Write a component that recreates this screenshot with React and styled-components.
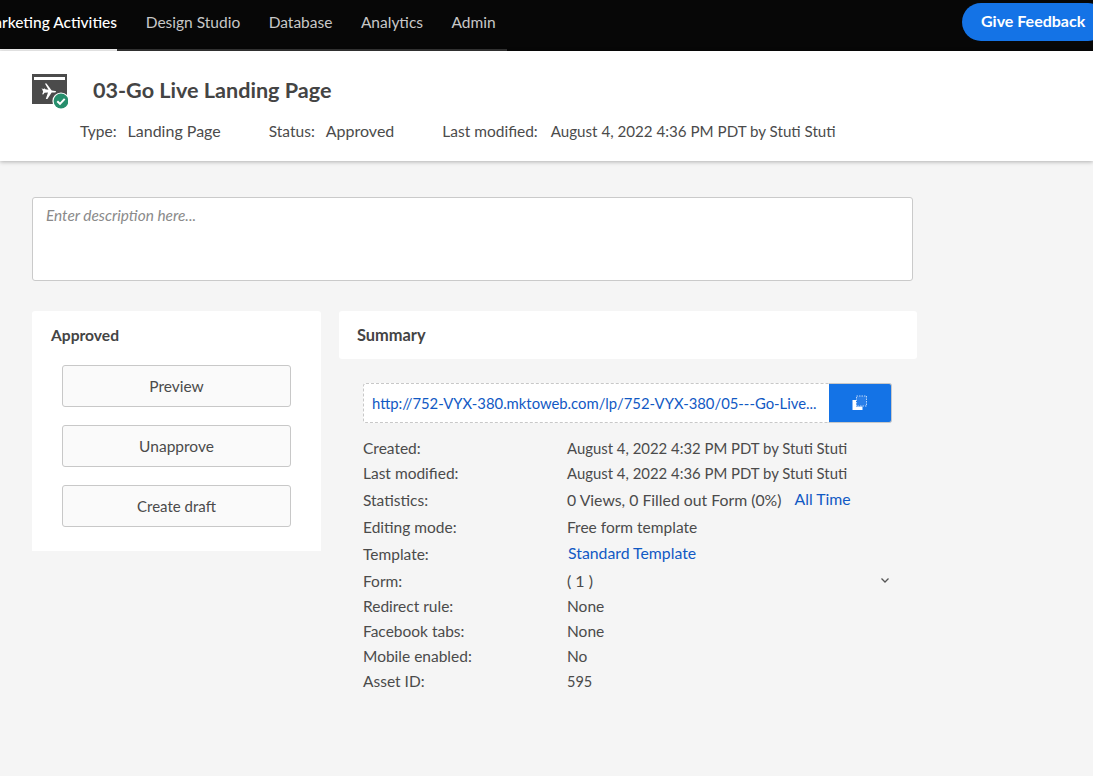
import React from "react";
import styled, { createGlobalStyle } from "styled-components";

const Global = createGlobalStyle`
  html, body { margin: 0; padding: 0; background: #f5f5f5; }
  body { font-family: Lato, "Open Sans", "Liberation Sans", sans-serif; color: #4b4b4b; overflow: hidden; }
`;
const Page = styled.div`width: 1093px; height: 776px; overflow: hidden; display: flex; flex-direction: column;`;
const Nav = styled.nav`height: 51px; flex: none; background: #070707; display: flex; align-items: stretch; justify-content: space-between; overflow: hidden;`;
const Tabs = styled.div`display: flex; margin-left: -20px; height: 51px; width: 527px; box-shadow: inset 0 -2px 0 #333;`;
const Tab = styled.a`
  display: flex; align-items: center; box-sizing: border-box; height: 51px; padding: 0 14.25px 7px; font-size: 15.5px; white-space: nowrap;
  color: ${p => p.$active ? "#fff" : "#c8c8c8"};
  ${p => p.$active && `box-shadow: inset 0 -2px 0 #f0f0f0; padding: 0 0 7px; font-weight: 500; margin-right: 14.5px;`}
`;
const Feedback = styled.button`
  margin-top: 3px; height: 38px; width: 145px; margin-right: -14px; border: 0; border-radius: 19px; background: #1473e6; color: #fff;
  font: 700 16px Lato, sans-serif; text-align: left; padding: 0 0 4px 19px; white-space: nowrap;
`;
const Header = styled.header`height: 110px; flex: none; background: #fff; box-shadow: 0 1px 4px rgba(0,0,0,.28); display: flex; flex-direction: column; padding-left: 31px; box-sizing: border-box;`;
const TitleRow = styled.div`display: flex; align-items: flex-start; padding-top: 23px; height: 68px; box-sizing: border-box;`;
const Title = styled.h1`margin: 3px 0 0 25px; font-size: 21.6px; line-height: 27px; font-weight: 700; color: #444; white-space: nowrap;`;
const Meta = styled.div`display: flex; padding-left: 49px; font-size: 15.5px; line-height: 24px; color: #4b4b4b;`;
const MetaLabel = styled.span`margin-right: ${p => p.$gap}px; white-space: nowrap;`;
const MetaValue = styled.span`margin-right: ${p => p.$gap}px; font-size: ${p => p.$size}px; white-space: nowrap;`;
const Content = styled.main`padding: 36px 0 0 32px; display: flex; flex-direction: column;`;
const Description = styled.div`
  width: 881px; height: 84px; box-sizing: border-box; background: #fff; border: 1px solid #cacaca; border-radius: 3px;
  padding: 7px 13px; font-size: 15.4px; line-height: 20px; font-style: italic; color: #8a8a8a;
`;
const Columns = styled.div`display: flex; gap: 18px; margin-top: 30px; align-items: flex-start;`;
const Side = styled.section`width: 289px; height: 240px; background: #fff; border-radius: 3px 3px 0 0;`;
const CardTitle = styled.h2`margin: 0; height: 48px; line-height: 48px; font-size: ${p => p.$size}px; font-weight: 700; color: #444; padding-left: ${p => p.$pad}px;`;
const Actions = styled.div`display: flex; flex-direction: column; gap: 18px; padding: 6px 30px 0;`;
const ActionButton = styled.button`
  height: 42px; box-sizing: border-box; background: #fafafa; border: 1px solid #c8c8c8; border-radius: 3px; color: #4b4b4b; font: ${p => p.$size || 15.5}px Lato, sans-serif;
`;
const SummaryColumn = styled.section`width: 578px;`;
const SummaryHead = styled.div`background: #fff; border-radius: 3px; height: 48px;`;
const SummaryBody = styled.div`padding: 24px 25px 0 24px;`;
const UrlBar = styled.div`display: flex; height: 40px; width: 529px;`;
const UrlText = styled.a`
  flex: 1; min-width: 0; box-sizing: border-box; background: #fff; border: 1px dashed #c8c8c8; border-right: 0; border-radius: 3px 0 0 3px;
  padding: 0 8px; line-height: 38px; color: #1159c4; font-size: 14.83px; white-space: nowrap;
`;
const CopyButton = styled.button`
  width: 63px; box-sizing: border-box; border: 1px solid #c8c8c8; border-left: 0; border-radius: 0 3px 3px 0; background: #1473e6; padding: 0; display: flex; align-items: center; justify-content: center;
`;
const Facts = styled.dl`margin: 13px 0 0; display: flex; flex-direction: column;`;
const Fact = styled.div`display: grid; grid-template-columns: 204px 1fr auto; height: ${p => p.$tall ? 27 : 25}px; line-height: 25px; align-items: baseline; font-size: 15.5px; white-space: nowrap;`;
const FactLabel = styled.dt`color: #4b4b4b;`;
const FactValue = styled.dd`margin: 0; color: #4b4b4b; line-height: 20px; font-size: ${p => p.$size || 15.5}px;`;
const Link = styled.a`color: #1159c4; font-size: 15.8px; margin-left: ${p => p.$gap || 0}px; position: relative; top: -1px;`;
const Chevron = styled.span`display: flex; align-self: start; margin: 6px 2px 0 0; color: #555;`;

const PageIcon = () => (
  <svg width="37" height="36" viewBox="0 0 37 36" style={{ flex: "none" }}>
    <rect x="1" y="0" width="35" height="30" fill="#4b4b4b" />
    <rect x="3" y="3" width="31" height="3" fill="#fff" />
    <path transform="translate(1 -1)" d="M9 15.4l3.2.6.1-1 1 1.2 3.2.6-3.6-6.3h1.6l5.2 6.9 3.4.7c1.4.3 1.4 1.2 0 1.3l-3.4.1-4.3 6.4h-1.6l2.2-6.3-3.4.1-1.4 1.7-1-.1.9-2.6-1-2.6z" fill="#fff" />
    <circle cx="30" cy="27" r="8.6" fill="#fff" />
    <circle cx="30" cy="27" r="7.4" fill="#268e6c" />
    <path d="M26.3 27.2l2.7 2.7 4.7-5" fill="none" stroke="#fff" strokeWidth="2" />
  </svg>
);
const CopyIcon = () => (
  <svg width="16" height="16" viewBox="0 0 16 16">
    <path d="M0.5 5h3.5v6.5h6.5V15H0.5z" fill="#fff" />
    <rect x="4.5" y="1" width="10" height="10" fill="#2a7fe9" stroke="#b7d4f8" strokeDasharray="1.5 1" />
  </svg>
);
const ChevronIcon = () => (
  <svg width="10" height="10" viewBox="0 0 10 10"><path d="M1.5 3.5L5 7l3.5-3.5" fill="none" stroke="currentColor" strokeWidth="1.3" /></svg>
);

const facts = [
  { label: "Created:", value: "August 4, 2022 4:32 PM PDT by Stuti Stuti", size: 14.9 },
  { label: "Last modified:", value: "August 4, 2022 4:36 PM PDT by Stuti Stuti", size: 14.9, tall: true },
  { label: "Statistics:", value: <>0 Views, 0 Filled out Form (0%)<Link $gap={13}>All Time</Link></>, size: 15.8, tall: true },
  { label: "Editing mode:", value: "Free form template", tall: true },
  { label: "Template:", value: <Link $gap={1}>Standard Template</Link>, tall: true },
  { label: "Form:", value: "( 1 )", size: 16, chevron: true },
  { label: "Redirect rule:", value: "None" },
  { label: "Facebook tabs:", value: "None" },
  { label: "Mobile enabled:", value: "No" },
  { label: "Asset ID:", value: "595", size: 14.5 },
];

export default function App() {
  return (
    <Page>
      <Global />
      <Nav>
        <Tabs>
          <Tab $active>Marketing Activities</Tab>
          <Tab>Design Studio</Tab>
          <Tab>Database</Tab>
          <Tab>Analytics</Tab>
          <Tab>Admin</Tab>
        </Tabs>
        <Feedback>Give Feedback</Feedback>
      </Nav>
      <Header>
        <TitleRow>
          <PageIcon />
          <Title>03-Go Live Landing Page</Title>
        </TitleRow>
        <Meta>
          <MetaLabel $gap={11}>Type:</MetaLabel><MetaValue $gap={48} $size={16}>Landing Page</MetaValue>
          <MetaLabel $gap={11}>Status:</MetaLabel><MetaValue $gap={48} $size={16}>Approved</MetaValue>
          <MetaLabel $gap={13}>Last modified:</MetaLabel><MetaValue $gap={0} $size={15.15}>August 4, 2022 4:36 PM PDT by Stuti Stuti</MetaValue>
        </Meta>
      </Header>
      <Content>
        <Description>Enter description here...</Description>
        <Columns>
          <Side>
            <CardTitle $pad={19} $size={15.6}>Approved</CardTitle>
            <Actions>
              <ActionButton>Preview</ActionButton>
              <ActionButton>Unapprove</ActionButton>
              <ActionButton $size={15}>Create draft</ActionButton>
            </Actions>
          </Side>
          <SummaryColumn>
            <SummaryHead><CardTitle $pad={18} $size={16.4}>Summary</CardTitle></SummaryHead>
            <SummaryBody>
              <UrlBar>
                <UrlText>http://752-VYX-380.mktoweb.com/lp/752-VYX-380/05---Go-Live...</UrlText>
                <CopyButton aria-label="Copy"><CopyIcon /></CopyButton>
              </UrlBar>
              <Facts>
                {facts.map(f => (
                  <Fact key={f.label} $tall={f.tall}>
                    <FactLabel>{f.label}</FactLabel>
                    <FactValue $size={f.size}>{f.value}</FactValue>
                    {f.chevron && <Chevron><ChevronIcon /></Chevron>}
                  </Fact>
                ))}
              </Facts>
            </SummaryBody>
          </SummaryColumn>
        </Columns>
      </Content>
    </Page>
  );
}
